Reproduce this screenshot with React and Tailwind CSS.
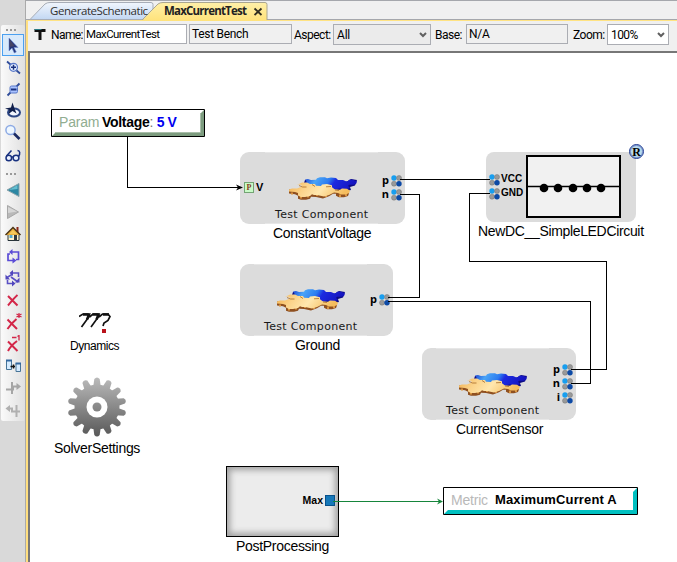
import React from "react";

const toolIcons = [
  // pointer
  <svg key="a" width="18" height="20" viewBox="0 0 18 20"><path d="M5 3v13l3-3 2.300 5 2-1-2.300-4.500h4z" fill="#243578" stroke="#6f8fd8" strokeWidth=".6" /><path d="M5.500 4v8l5-1z" fill="#446" /></svg>,
  // zoom in
  <svg key="b" width="18" height="18" viewBox="0 0 18 18"><path d="M3 3.500l4 3.500M12 12l4 3.500" stroke="#2f4c9a" strokeWidth="1.800" fill="none" /><circle cx="9.500" cy="9.300" r="4" fill="#e6efff" stroke="#5878c8" strokeWidth="1.200" /><path d="M7 9.300h5M9.500 6.800v5" stroke="#17307e" strokeWidth="1.500" /></svg>,
  // zoom out
  <svg key="c" width="18" height="18" viewBox="0 0 18 18"><path d="M15.500 3.500L12 7M7 12l-3.500 3.500" stroke="#2f4c9a" strokeWidth="1.800" fill="none" /><rect x="6" y="6" width="7.500" height="7" rx="1.500" fill="#a9c2ff" stroke="#5878c8" /><path d="M7 9.500h5.500" stroke="#17307e" strokeWidth="2" /></svg>,
  // rotate
  <svg key="d" width="18" height="18" viewBox="0 0 18 18"><ellipse cx="10" cy="10.500" rx="6" ry="4" fill="#f2f6ff" stroke="#2c4684" strokeWidth="2" /><path d="M1 6.500l6-1L8.500.5l2 6 2 5-4-2.500-4 3 1-4z" fill="#101f4b" /></svg>,
  // magnifier
  <svg key="e" width="18" height="18" viewBox="0 0 18 18"><circle cx="6.500" cy="6" r="4.600" fill="#eef7ff" stroke="#8daae4" strokeWidth="1.500" /><path d="M10 9.500l5.500 5.500" stroke="#1b2b64" strokeWidth="2.600" /></svg>,
  // glasses
  <svg key="f" width="18" height="18" viewBox="0 0 18 18" fill="none" stroke="#18317f" strokeWidth="1.500"><ellipse cx="4.800" cy="12" rx="2.800" ry="2.800" fill="#eaf1ff" /><ellipse cx="12" cy="12" rx="2.900" ry="2.700" fill="#eaf1ff" /><path d="M2.500 10L7.500 4.500M14.500 10.500c2-3 1.500-6-1-6M7.500 11h2" /></svg>,
];

const navIcons = [
  <svg key="a" width="18" height="18" viewBox="0 0 18 18"><path d="M3 8L15 1.500v13z" fill="#2c87a3" stroke="#8aa3ab" /><path d="M5 8l8.500-5v4z" fill="#65bed0" /></svg>,
  <svg key="b" width="18" height="18" viewBox="0 0 18 18"><path d="M14.500 8L3.500 1.500v13z" fill="#b9b9b9" stroke="#a7a7a7" /><path d="M4 3l9 4.500L4 9z" fill="#d6d6d6" /></svg>,
  <svg key="c" width="18" height="18" viewBox="0 0 18 18"><path d="M12.500 1h2v6h-2z" fill="#8b2515" /><path d="M4 7.500h11v7H4z" fill="#fff2ca" stroke="#263238" /><path d="M1.500 9L9 1.500l7.500 7.500" fill="#e7ad3c" stroke="#4b3517" strokeWidth="1.500" /><path d="M5 8l4-4 4 4z" fill="#f7c95c" /><rect x="10" y="9" width="3" height="5.500" fill="#303840" /><rect x="5.500" y="9" width="3" height="3" fill="#56a9d0" /></svg>,
  <svg key="d" width="18" height="18" viewBox="0 0 18 18" fill="none" stroke="#5a4bd6" strokeWidth="1.700"><path d="M8 4h6.500v7.500H12M10 12.500H4V6h2" /><path d="M8.500 1v6L5 4zM8.500 9.500v6l4-3z" fill="#5a4bd6" stroke="none" /></svg>,
  <svg key="e" width="18" height="18" viewBox="0 0 18 18" fill="none" stroke="#5a50c4" strokeWidth="1.600"><path d="M8 3h6.500v4M9 13.500H3.500V10M3 7.500l5-3M7 7l7 5" /><path d="M9 0v6L5.500 3zM8 10.500v6l3.500-3zM15.500 7.500v5l-4.500 0zM1.500 4.500v5l4.500 0z" fill="#5146bd" stroke="none" /></svg>,
  <svg key="f" width="18" height="18" viewBox="0 0 18 18"><path d="M4 4l9.500 9.500M13.500 3C10 6 7 10 4 13.500" stroke="#d32648" strokeWidth="2" fill="none" /></svg>,
  <svg key="g" width="20" height="20" viewBox="0 0 20 20" fill="none" stroke="#d32648"><path d="M4.500 6.500l9.500 9.500M13.500 6C10 9 7 12 4.500 16" strokeWidth="2" /><path d="M16 0v5M13.500 1l5 3M18.500 1l-5 3" strokeWidth="1.200" /></svg>,
  <svg key="h" width="20" height="20" viewBox="0 0 20 20" fill="none" stroke="#d32648"><path d="M5 6.500l9.500 9.500M14 6C10 9 7 12 5 16" strokeWidth="2" /><path d="M9 2.500h4.500M14.500 1.500l1.500-1v5" strokeWidth="1.300" /></svg>,
  <svg key="i" width="18" height="18" viewBox="0 0 18 18"><path d="M2.500 2.500h5v9h-5zM12 5.500h4.500v8H12z" fill="#d5ebff" stroke="#477497" /><path d="M2 2.500h6M11.500 5.500h5.500" stroke="#3368a0" strokeWidth="2" /><path d="M6.500 8.500h4.500M9.500 6.500v4" stroke="#111" strokeWidth="1.500" /></svg>,
  <svg key="j" width="18" height="18" viewBox="0 0 18 18"><path d="M2 9.500h7V6.500h4M8 2v12" stroke="#a6a6a6" strokeWidth="2" fill="none" /><path d="M12.500 3l4.500 3.500-4.500 3.500z" fill="#a6a6a6" /></svg>,
  <svg key="k" width="18" height="18" viewBox="0 0 18 18"><path d="M4 6.500h4v3h8M12.500 3v12" stroke="#b0b0b0" strokeWidth="2" fill="none" /><path d="M6 3L1.500 6.500 6 10z" fill="#b0b0b0" /></svg>,
];

function Grip() {
  return (
    <div className="flex h-[9px] items-center gap-[2px] pl-[5px]">
      <i className="size-[2px] bg-[#999]" /><i className="size-[2px] bg-[#999]" /><i className="size-[2px] bg-[#999]" />
    </div>
  );
}

function Sidebar() {
  return (
    <aside className="h-full w-[25px] shrink-0 bg-[#d9d9d9] pt-[25px]">
      <div className="ml-px h-[396px] w-[24px] rounded-[2px] bg-gradient-to-r from-[#fafafa] to-[#e0e0e0]">
        <Grip />
        <div className="flex flex-col">
          {toolIcons.map((icon, i) => (
            <div key={i} className={i === 0 ? "ml-px flex h-[22px] w-[22px] items-center justify-center border border-[#4ba0f0] bg-[#d9eafb]" : "flex h-[22px] w-[24px] items-center justify-center"}>{icon}</div>
          ))}
        </div>
        <div className="pt-[3px]"><Grip /></div>
        <div className="flex flex-col pt-[2px]">
          {navIcons.map((icon, i) => (
            <div key={i} className="flex h-[22px] w-[23px] items-center justify-center">{icon}</div>
          ))}
        </div>
      </div>
    </aside>
  );
}

function Tabs() {
  return (
    <div className="relative h-[21px] bg-[#f0f0f0]">
      <svg className="absolute left-0 top-0" width="651" height="21" viewBox="26 0 651 21">
        <defs>
          <linearGradient id="blueTab" x2="0" y2="1"><stop stopColor="#f1f6fd" /><stop offset="1" stopColor="#c2d7f3" /></linearGradient>
          <linearGradient id="yellowTab" x2="0" y2="1"><stop stopColor="#fff0a9" /><stop offset="1" stopColor="#ffe27a" /></linearGradient>
        </defs>
        <path d="M26 .5h651M26 19.500h651" stroke="#a5a7ac" />
        <path d="M30 19.500L45 4q2-1.500 5-1.500h101q2 0 2 2v15z" fill="url(#blueTab)" stroke="#a7adb7" />
        <path d="M26 20.500h651" stroke="#ffe383" />
        <path d="M142 21L158 4q2-1.500 5-1.500h102q2 0 2 2V21z" fill="url(#yellowTab)" />
        <path d="M142 20L158 4q2-1.500 5-1.500h102q2 0 2 2V20" fill="none" stroke="#aaa690" />
        <path d="M254.500 8.500l7 6.500M261.500 8.500l-7 6.500" stroke="#302d20" strokeWidth="1.800" />
      </svg>
      <div className="relative flex pl-[24px] pt-[3px] font-['Open_Sans',sans-serif] text-[11.5px] leading-[16px] text-[#303030]">
        <span className="w-[114px] whitespace-nowrap tracking-[-0.42px]">GenerateSchematic</span>
        <span className="whitespace-nowrap font-bold tracking-[-0.8px] text-[#222]">MaxCurrentTest</span>
      </div>
    </div>
  );
}

function Chevron() {
  return <svg className="mr-[3px]" width="8" height="8" viewBox="0 0 8 8"><path d="M1 2l3 3 3-3" fill="none" stroke="#606060" strokeWidth="2" /></svg>;
}

function PropertyBar() {
  return (
    <div className="flex h-[30px] items-start bg-[#f0f0f0] pt-[3px] font-[Roboto,sans-serif] text-[12px] leading-[18px] tracking-[-0.2px] text-black">
      <svg className="ml-[6px] mt-[4px] shrink-0" width="12" height="13" viewBox="0 0 12 13"><path d="M.5 2.500h11M6 2v10" stroke="#111" strokeWidth="3" /><path d="M.5 1.500h7" stroke="#277c87" /></svg>
      <span className="ml-[5px] mt-[2px] w-[33px] shrink-0 whitespace-nowrap tracking-[-0.6px]">Name:</span>
      <div className="h-[20px] w-[103px] shrink-0 border border-[#abadb3] bg-white pl-px text-[11.5px] tracking-[-0.6px]">MaxCurrentTest</div>
      <div className="ml-[2px] h-[20px] w-[103px] shrink-0 border border-[#abadb3] bg-[#f0f0f0] pl-[2px] tracking-[-0.3px]">Test Bench</div>
      <span className="ml-[2px] mt-[2px] w-[39px] shrink-0 whitespace-nowrap tracking-[-0.5px]">Aspect:</span>
      <div className="flex h-[21px] w-[98px] shrink-0 items-center justify-between border border-[#abadb3] bg-[#ebebeb] pl-[3px]"><span>All</span><Chevron /></div>
      <span className="ml-[4px] mt-[2px] w-[31px] shrink-0 whitespace-nowrap tracking-[-0.5px]">Base:</span>
      <div className="h-[20px] w-[102px] shrink-0 border border-[#abadb3] bg-[#f0f0f0] pl-[2px]">N/A</div>
      <span className="ml-[5px] mt-[2px] w-[34px] shrink-0 whitespace-nowrap tracking-[-0.5px]">Zoom:</span>
      <div className="flex h-[21px] w-[62px] shrink-0 items-center justify-between border border-[#abadb3] bg-white pl-[3px] tracking-[-0.6px]"><span>100%</span><Chevron /></div>
    </div>
  );
}

function Wires() {
  return (
    <svg className="absolute left-0 top-0" width="647" height="509" viewBox="30 53 647 509">
      <g fill="none" stroke="#000" shapeRendering="crispEdges">
        <path d="M127.500 137v50.500H241" />
        <path d="M400 179.500h90M400 194.500h19.500v103H388M388 301.500h202.500v82H571" />
        <path d="M490 193.500h-20.500v68h137v108H571" />
      </g>
      <path d="M236 184.500l7 3-7 3 2-3z" />
      <path d="M333 501.500h108" stroke="#16853b" shapeRendering="crispEdges" />
      <path d="M437 498.500l6 3-6 3 2-3z" fill="#16853b" />
    </svg>
  );
}

function Port() {
  return (
    <svg className="block shrink-0" width="11" height="12" viewBox="0 0 11 12">
      <circle cx="3" cy="3" r="2.700" fill="#189eef" /><circle cx="8" cy="3" r="2.500" fill="#999" stroke="#777" strokeWidth=".5" />
      <circle cx="3" cy="8.700" r="2.500" fill="#999" stroke="#777" strokeWidth=".5" /><circle cx="8" cy="8.700" r="2.700" fill="#0c49a5" />
    </svg>
  );
}

function Puzzle() {
  return (
    <svg className="block" width="70" height="23" viewBox="0 0 70 23">
      <defs>
        <linearGradient id="pieceBlue" x2="1" y2=".15"><stop stopColor="#1638cf" /><stop offset=".25" stopColor="#4aa4f6" /><stop offset=".5" stopColor="#2c7cf0" /><stop offset=".62" stopColor="#1c2be0" /><stop offset="1" stopColor="#1614c0" /></linearGradient>
        <linearGradient id="pieceGold" x2="1" y2=".2"><stop stopColor="#f3b04c" /><stop offset=".3" stopColor="#fbd288" /><stop offset=".6" stopColor="#ffe7ae" /><stop offset="1" stopColor="#f5bd5e" /></linearGradient>
      </defs>
      <path d="M17 3l-1 3 3 2 8 2 31 4 5-1-1-3 5-1.500 2-5.500-6-1-5 3z" fill="#0c0b84" />
      <path d="M17 2.500l3-.5 3 1 5-.2 1-1.500 3-1h5l2 1 4-.8 5 .5 2 2 5 0 3 1.200 2 0 1-1.500 4 0 4 1.800-1 2.500-3 .8h-4l-1 1.200 2 1.500-2 1.500-5 .5-3-1-6 1-20-1-9-3-1-2 3-1z" fill="url(#pieceBlue)" />
      <path d="M1 12.500h12l44 1h4v3l-1 2.500-4 1.200h-5l-3-1.500 0-2-3 0-4 2.500-6 2.300-7-1.500-5-.3-1 2-4 1h-5l-3-1v-3l-3-1.500-6-.7z" fill="#8f5020" />
      <path d="M4 15.500v2M13 19v2.500M20 18.500v2M29 17.500v1.500M38 17.500v2.500M52 17.500v2.500M58 17v2" stroke="#d9943f" strokeWidth="2" />
      <path d="M11 7l3-1.500h5l3 1.500 5 0 1 1.800 5 .2 1-1.500 5-.5 5 1.200 0 2 3 2.300 5 .2 2-1.200 5 .2 3 2-1 2.500-4 1.200h-4l-3-1.500-4-.5-5 2.500-5 1.500-7-1.500-3 .2-2-.8-2 1.800-5 1h-4l-3-1.500v-2.500l-3-1-6-.5 0-2 3-1.200h5l5-1.800-1-1.800-4-.5z" fill="url(#pieceGold)" />
      <path d="M11 8.500l3.500 1.500 4 0M24 7.500l3 2M38 9.800l5-.3M47 13l4 .5" stroke="#a86b28" strokeWidth=".8" fill="none" />
    </svg>
  );
}

function TestComponent({ className, flangeClass, artClass, labelClass, nameClass, name, children }) {
  return (
    <div className={"absolute h-[72px] rounded-[9px] bg-[#dcdcdc] " + className}>
      <div className={"absolute top-0 h-[72px] border-y border-[#e7e7e7] " + flangeClass} />
      <div className={"absolute " + artClass}><Puzzle /></div>
      <div className={"absolute top-[56px] whitespace-nowrap font-['DejaVu_Sans',sans-serif] text-[11px] leading-[13px] tracking-[0.32px] text-[#181818] " + labelClass}>Test Component</div>
      {children}
      <div className={"absolute top-[73px] whitespace-nowrap font-['Liberation_Sans',sans-serif] text-[14px] leading-[16px] tracking-[-0.3px] text-black " + nameClass}>{name}</div>
    </div>
  );
}

function PortRow({ label }) {
  return <div className="flex h-[14px] items-center justify-end gap-[2px] font-['Open_Sans',sans-serif] text-[11px] font-bold leading-[12px]"><span className="-mt-[2px]">{label}</span><Port /></div>;
}

function Gear() {
  return (
    <svg className="absolute left-[37px] top-[324px]" width="60" height="60" viewBox="-30 -30 60 60">
      <defs><linearGradient id="metal" gradientUnits="userSpaceOnUse" x1="0" y1="-30" x2="0" y2="30"><stop stopColor="#bbb" /><stop offset="1" stopColor="#575757" /></linearGradient>
        <mask id="teeth"><circle r="22.500" fill="#fff" />
          {Array.from({ length: 14 }, (_, i) => <path key={i} d="M-3.800-20L-2.700-28Q0-31 2.700-28L3.800-20z" fill="#fff" transform={`rotate(${i * 360 / 14})`} />)}
          <circle r="10.500" fill="#000" /><circle r="4.500" fill="#fff" /></mask>
      </defs>
      <rect x="-30" y="-30" width="60" height="60" fill="url(#metal)" mask="url(#teeth)" />
    </svg>
  );
}

function Canvas() {
  return (
    <main className="relative min-h-0 flex-1 overflow-hidden bg-white font-['Liberation_Sans',sans-serif]">
      <div className="absolute left-[21px] top-[56px] h-[28px] w-[154px]">
        <svg className="absolute inset-0" width="154" height="28"><path d="M.5.5h153v27H.5z" fill="#fff" stroke="#000" /><path d="M1 27l4-4h144V5l4-4v26z" fill="#7d9c7f" /><path d="M4 23.500h145.500V4" fill="none" stroke="#a9bea9" /></svg>
        <div className="relative whitespace-nowrap pl-[8px] pt-[5px] text-[14px] leading-[16px] tracking-[-0.2px]"><span className="text-[#91ad91]">Param</span> <b className="-ml-[1px] tracking-[-0.3px]">Voltage</b><span className="text-[#777]">:</span> <b className="tracking-[-0.5px] text-[#0000f0]">5 V</b></div>
      </div>

      <TestComponent className="left-[210px] top-[99px] w-[165px]" flangeClass="left-[25px] w-[113px]" artClass="left-[48px] top-[25px]" labelClass="left-[35px]" nameClass="left-[33px]" name="ConstantVoltage">
        <div className="absolute left-[4px] top-[30px] flex items-center gap-[2px] text-[11px] font-bold leading-[11px]"><span className="flex h-[11px] w-[10px] items-center justify-center border border-[#74a474] bg-[#c9fac7] font-['Liberation_Serif',serif] text-[8px] text-[#8b391a]">P</span><span className="-mt-px">V</span></div>
        <div className="absolute right-[3px] top-[22px]"><PortRow label="p" /><PortRow label="n" /></div>
      </TestComponent>

      <TestComponent className="left-[210px] top-[211px] w-[153px]" flangeClass="left-[14px] w-[113px]" artClass="left-[36px] top-[25px]" labelClass="left-[24px]" nameClass="left-[55px]" name="Ground">
        <div className="absolute right-[3px] top-[29px]"><PortRow label="p" /></div>
      </TestComponent>

      <TestComponent className="left-[392px] top-[295px] w-[154px]" flangeClass="left-[14px] w-[113px]" artClass="left-[36px] top-[25px]" labelClass="left-[24px]" nameClass="left-[34px]" name="CurrentSensor">
        <div className="absolute right-[3px] top-[15px]"><PortRow label="p" /><PortRow label="n" /><PortRow label="i" /></div>
      </TestComponent>

      <div className="absolute left-[456px] top-[99px] h-[70px] w-[150px] rounded-[8px] bg-[#dcdcdc]">
        <div className="absolute left-[3px] top-[21px] text-[10px] font-bold leading-[14px]">
          <div className="flex h-[14px] items-center gap-[1px]"><Port /><span className="-mt-[2px] tracking-[0.1px]">VCC</span></div>
          <div className="flex h-[14px] items-center gap-[1px]"><Port /><span className="-mt-[2px]">GND</span></div>
        </div>
        <svg className="absolute left-[40px] top-[3px]" width="95" height="63"><path d="M1 1h93v61H1z" fill="#f1f1f1" stroke="#000" strokeWidth="2" /><path d="M1 31.500h93" stroke="#000" strokeWidth="1.500" /><g><circle cx="18" cy="33" r="4.300" /><circle cx="32" cy="33" r="4.300" /><circle cx="47" cy="33" r="4.300" /><circle cx="61" cy="33" r="4.300" /><circle cx="75" cy="33" r="4.300" /></g></svg>
        <div className="absolute left-[143px] top-[-8px] flex size-[15px] items-center justify-center rounded-full border border-[#203a91] bg-[#b9dcec] font-['Liberation_Serif',serif] text-[12px] font-bold leading-none shadow-[inset_0_0_0_1px_#7d94d0]">R</div>
        <div className="absolute left-[-8px] top-[71px] whitespace-nowrap text-[14px] leading-[16px] tracking-[-0.34px]">NewDC__SimpleLEDCircuit</div>
      </div>

      <svg className="absolute left-[49px] top-[259px]" width="34" height="22" viewBox="0 0 34 22"><path d="M0 4.500L4 2h5l1.500 2L2.500 15M10.500 5L14 2h5l1 2-8 11M20 5l3.500-3H29l2 2.500-2 4-4 2.500-1 3" fill="none" stroke="#111" strokeWidth="1.700" /><path d="M4 2.500h6l-2 5M13.500 2.500h6l-2 5M24 2.500h6" fill="none" stroke="#111" strokeWidth="2.500" /><path d="M23 17h4v4h-4z" fill="#b9121b" /></svg>
      <div className="absolute left-[40px] top-[286px] whitespace-nowrap text-[12px] leading-[14px] tracking-[-0.45px]">Dynamics</div>
      <Gear />
      <div className="absolute left-[24px] top-[387px] whitespace-nowrap text-[14px] leading-[16px] tracking-[-0.3px]">SolverSettings</div>

      <div className="absolute left-[196px] top-[413px] h-[71px] w-[113px] border border-black bg-[#ececec] shadow-[inset_0_0_6px_3px_#a0a0a0]">
        <div className="flex items-center justify-end gap-[2px] pr-[3px] pt-[28px] text-[10.5px] font-bold leading-[12px]"><span className="-mt-px">Max</span><span className="h-[11px] w-[10px] border border-[#08518b] bg-[#1577b8]" /></div>
        <div className="absolute left-[9px] top-[71px] whitespace-nowrap text-[14px] leading-[16px] tracking-[-0.3px]">PostProcessing</div>
      </div>

      <div className="absolute left-[413px] top-[434px] h-[28px] w-[195px]">
        <svg className="absolute inset-0" width="195" height="28"><path d="M.5.5h194v27H.5z" fill="#fff" stroke="#000" /><path d="M1 27l4-4h185V5l4-4v26z" fill="#00c0c0" /></svg>
        <div className="relative flex whitespace-nowrap pl-[8px] pt-[5px] text-[14px] leading-[16px]"><span className="w-[44px] tracking-[-0.2px] text-[#b9b9b9]">Metric</span><b className="text-[13px] tracking-[0.15px]">MaximumCurrent A</b></div>
      </div>
      <Wires />
    </main>
  );
}

export default function App() {
  return (
    <div className="flex h-[562px] w-[677px] overflow-hidden bg-[#d9d9d9]">
      <Sidebar />
      <div className="flex min-w-0 flex-1 flex-col border-l border-[#aaa]">
        <Tabs />
        <div className="flex min-h-0 flex-1 flex-col border-l-2 border-[#ffdf80]">
          <PropertyBar />
          <div className="flex min-h-0 flex-1 flex-col border-l-2 border-t-2 border-[#777]"><Canvas /></div>
        </div>
      </div>
    </div>
  );
}
